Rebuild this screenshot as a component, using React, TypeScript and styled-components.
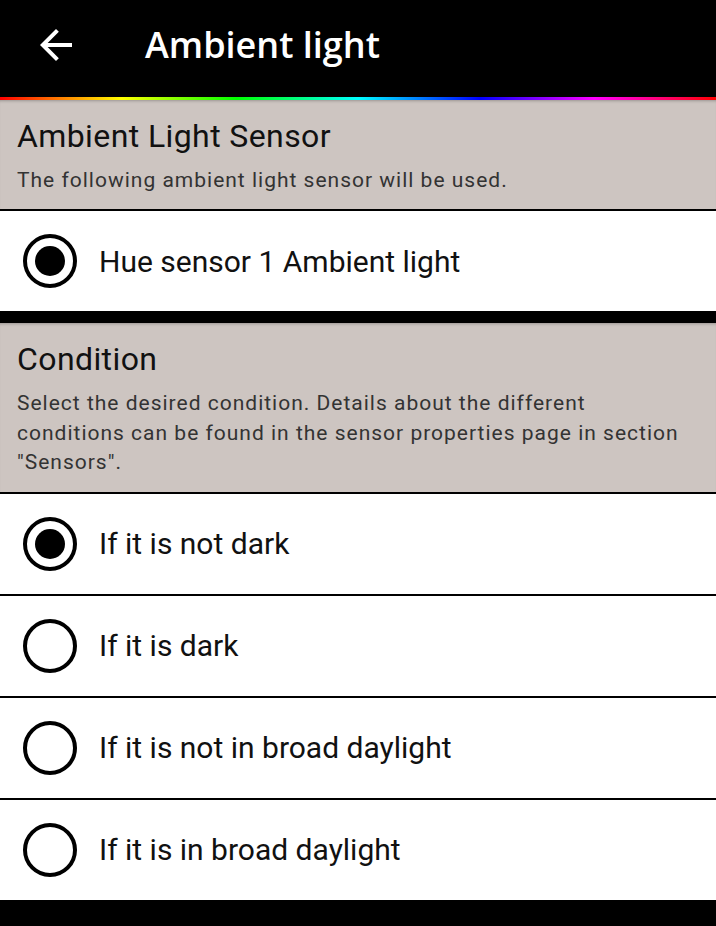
import styled, { createGlobalStyle } from "styled-components";
import { useState } from "react";

const GlobalStyle = createGlobalStyle`
  html, body {
    margin: 0;
    padding: 0;
    background: #000;
  }

  body {
    font-family: Roboto, "Liberation Sans", sans-serif;
  }
`;

const conditions = [
  "If it is not dark",
  "If it is dark",
  "If it is not in broad daylight",
  "If it is in broad daylight",
];

export default function App() {
  const [condition, setCondition] = useState(0);

  return (
    <Page>
      <GlobalStyle />
      <Header>
        <BackButton aria-label="Back">
          <svg width="48" height="48" viewBox="0 0 24 24">
            <path
              fill="#fff"
              d="M20 11H7.83l5.59-5.59L12 4l-8 8 8 8 1.41-1.41L7.83 13H20v-2z"
            />
          </svg>
        </BackButton>
        <Title>Ambient light</Title>
      </Header>
      <Rainbow />

      <Group>
        <SectionHead>
          <SectionTitle>Ambient Light Sensor</SectionTitle>
          <SectionText>The following ambient light sensor will be used.</SectionText>
        </SectionHead>
        <Option>
          <Radio $checked />
          <Label>Hue sensor 1 Ambient light</Label>
        </Option>
      </Group>

      <Group>
        <SectionHead>
          <SectionTitle>Condition</SectionTitle>
          <SectionText>
            Select the desired condition. Details about the different
            conditions can be found in the sensor properties page in section
            "Sensors".
          </SectionText>
        </SectionHead>
        {conditions.map((text, i) => (
          <Option key={text} onClick={() => setCondition(i)}>
            <Radio $checked={condition === i} />
            <Label>{text}</Label>
          </Option>
        ))}
      </Group>
    </Page>
  );
}

const Page = styled.div`
  display: flex;
  flex-direction: column;
  gap: 12px;
  min-height: 926px;
  background: #000;
`;

const Header = styled.header`
  display: flex;
  align-items: center;
  box-sizing: border-box;
  height: 97px;
  padding: 0 0 8px 32px;
  margin-bottom: -12px;
  background: #000;
`;

const BackButton = styled.button`
  display: flex;
  width: 48px;
  height: 48px;
  padding: 0;
  border: none;
  background: none;
`;

const Title = styled.h1`
  margin: 0 0 0 65px;
  font-family: "Open Sans", "Noto Sans", sans-serif;
  font-size: 36px;
  font-weight: 600;
  color: #fff;
`;

const Rainbow = styled.div`
  height: 3px;
  margin-bottom: -12px;
  background: linear-gradient(
    to right,
    #ff0000 0%,
    #ffff00 17%,
    #00ff00 33%,
    #00ffff 50%,
    #0000ff 67%,
    #ff00ff 83%,
    #ff0000 100%
  );
`;

const Group = styled.section`
  display: flex;
  flex-direction: column;
  gap: 2px;
  background: #000;
`;

const SectionHead = styled.div`
  padding: 14px 28px 14px 17px;
  background: #cdc5c1;
  box-shadow: inset 0 3px 3px -2px rgba(0, 0, 0, 0.25);
`;

const SectionTitle = styled.h2`
  margin: 0;
  font-size: 32px;
  font-weight: 400;
  line-height: 44px;
  letter-spacing: 0.4px;
  color: #111;
`;

const SectionText = styled.p`
  margin: 8px 0 0;
  font-size: 21px;
  line-height: 29.4px;
  letter-spacing: 1px;
  color: #333;
`;

const Option = styled.div`
  display: flex;
  align-items: center;
  gap: 22px;
  height: 100px;
  padding-left: 23px;
  background: #fff;
  cursor: pointer;
`;

const Radio = styled.span<{ $checked?: boolean }>`
  position: relative;
  flex: none;
  box-sizing: border-box;
  width: 54px;
  height: 54px;
  border: 4.5px solid #000;
  border-radius: 50%;

  &::after {
    content: "";
    display: ${({ $checked }) => ($checked ? "block" : "none")};
    position: absolute;
    inset: 8px;
    border-radius: 50%;
    background: #000;
  }
`;

const Label = styled.span`
  font-size: 30px;
  color: #111;
`;
